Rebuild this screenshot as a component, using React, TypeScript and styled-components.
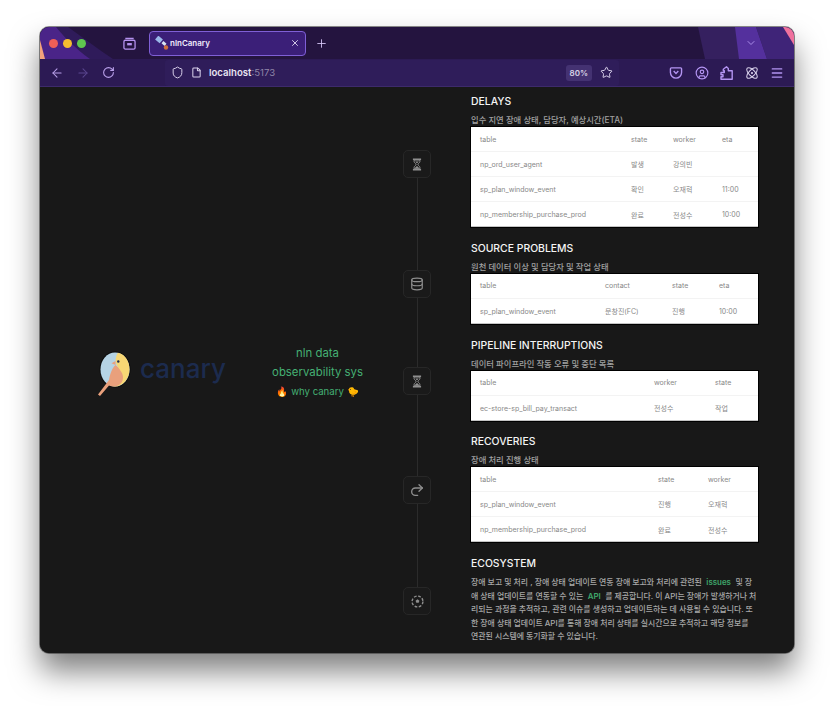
import React from "react";
import styled, { createGlobalStyle } from "styled-components";
import {
  ArrowLeft,
  ArrowRight,
  RotateCw,
  Shield,
  File,
  Star,
  Plus,
  X,
  ChevronDown,
  Database,
  Redo2,
  Menu,
  Atom,
  CircleUser,
} from "lucide-react";

const GlobalStyle = createGlobalStyle`
  html, body {
    margin: 0;
    padding: 0;
    background: #fff;
  }
  body {
    font-family: Inter, "Noto Sans CJK KR", sans-serif;
  }
`;

const Page = styled.div`
  width: 834px;
  height: 706px;
  padding: 27px 40px 53px;
  box-sizing: border-box;
  overflow: hidden;
`;

const BrowserWindow = styled.div`
  height: 626px;
  border-radius: 9px;
  overflow: hidden;
  display: flex;
  flex-direction: column;
  background: #181818;
  box-shadow: 0 0 0 1px rgba(60, 60, 60, 0.6), 0 18px 30px rgba(0, 0, 0, 0.5);
`;

const TabBar = styled.div`
  position: relative;
  height: 32px;
  flex: none;
  display: flex;
  align-items: center;
  background: #24143f;
  overflow: hidden;
`;

const TabDecor = styled.svg`
  position: absolute;
  inset: 0;
  width: 754px;
  height: 32px;
`;

const TrafficLights = styled.div`
  position: relative;
  display: flex;
  gap: 5px;
  padding-left: 9px;
  width: 72px;
  box-sizing: border-box;
`;

const Light = styled.span<{ $color: string }>`
  width: 9px;
  height: 9px;
  border-radius: 50%;
  background: ${(p) => p.$color};
`;

const TabsIcon = styled.div`
  position: relative;
  width: 34px;
  display: flex;
  justify-content: center;
  color: #b592f0;
`;

const Tab = styled.div`
  position: relative;
  margin-left: 3px;
  width: 157px;
  height: 25px;
  box-sizing: border-box;
  border: 1px solid #7f5fd6;
  border-radius: 4px;
  background: #3b1f78;
  display: flex;
  align-items: center;
  padding: 0 5px;
  gap: 1px;
  color: #efe9fb;
  font-size: 8px;
  font-weight: 600;
`;

const TabTitle = styled.span`
  flex: 1;
`;

const NewTab = styled.div`
  position: relative;
  margin-left: 9px;
  display: flex;
  color: #d8c8f8;
`;

const Collapse = styled.div`
  position: absolute;
  right: 37px;
  top: 10px;
  display: flex;
  color: #a98ce8;
`;

const NavBar = styled.div`
  height: 28px;
  flex: none;
  display: flex;
  align-items: center;
  background: #2c1a54;
  border-bottom: 1px solid #3d2a6b;
  box-sizing: border-box;
  padding-left: 10px;
`;

const NavButtons = styled.div`
  display: flex;
  align-items: center;
  gap: 12px;
  width: 115px;
  color: #b9a0ea;
`;

const UrlBar = styled.div`
  width: 454px;
  height: 26px;
  display: flex;
  align-items: center;
  background: #2f1d5a;
  border-radius: 3px;
  padding: 0 6px;
  box-sizing: border-box;
  color: #dcd4ee;
  gap: 7px;
`;

const UrlText = styled.span`
  flex: 1;
  font-size: 9.6px;
  font-weight: 600;
  color: #e8e4f2;
`;

const UrlPort = styled.span`
  font-weight: 400;
  color: #8f86a8;
`;

const Zoom = styled.span`
  background: #443272;
  color: #d8d2e6;
  font-size: 8px;
  font-weight: 600;
  padding: 3px 4px;
  border-radius: 3px;
  margin-right: 1px;
`;

const NavIcons = styled.div`
  flex: 1;
  display: flex;
  align-items: center;
  justify-content: flex-end;
  gap: 11.5px;
  padding-right: 10px;
  color: #b394f2;
`;

const Content = styled.main`
  flex: 1;
  min-height: 0;
  display: flex;
  background: #181818;
`;

const Hero = styled.section`
  width: 363px;
  flex: none;
  display: flex;
  align-items: center;
  padding: 0 28px 0 55px;
  box-sizing: border-box;
`;

const Logo = styled.div`
  display: flex;
  align-items: center;
  width: 165px;
  flex: none;
  margin-top: 6px;
`;

const LogoWord = styled.span`
  font-size: 26px;
  font-weight: 500;
  line-height: 1;
  color: #1c2b4e;
  margin-top: -9px;
`;

const Tagline = styled.div`
  flex: 1;
  display: flex;
  flex-direction: column;
  align-items: center;
  color: #45b074;
  font-size: 11.4px;
  line-height: 19px;
  margin-top: 5px;
`;

const WhyLine = styled.span`
  font-size: 9.6px;
`;

const Timeline = styled.div`
  width: 28px;
  flex: none;
  display: flex;
  flex-direction: column;
  align-items: center;
  padding-top: 63px;
`;

const Node = styled.div`
  width: 28px;
  height: 28px;
  flex: none;
  box-sizing: border-box;
  border: 1px solid #272727;
  border-radius: 5px;
  display: flex;
  align-items: center;
  justify-content: center;
  background: #1a1a1a;
  color: #8f8f8f;
`;

const Connector = styled.div<{ $h: number }>`
  width: 1px;
  height: ${(p) => p.$h}px;
  background: #2b2b2b;
`;

const Column = styled.div`
  margin-left: 40px;
  width: 287px;
  flex: none;
  padding-top: 8px;
`;

const Section = styled.section`
  margin-bottom: 14.75px;
`;

const Heading = styled.h2`
  margin: 0;
  font-size: 10.4px;
  line-height: 14px;
  font-weight: 500;
  color: #f4f4f4;
`;

const SubHeading = styled.p`
  margin: 5px 0 0;
  font-size: 8.3px;
  line-height: 13px;
  color: #a0a0a0;
  font-weight: 500;
`;

const TableCard = styled.div`
  background: #fff;
  box-shadow: inset 0 -1px 0 #c4c4c4, 0 0 0 1px #000;
`;

const Row = styled.div<{ $cols: string }>`
  display: grid;
  grid-template-columns: ${(p) => p.$cols};
  height: 25px;
  align-items: center;
  font-size: 7px;
  color: #888;
  border-bottom: 1px solid #f3f3f3;
  box-sizing: border-box;
  &:last-child {
    border-bottom: 0;
  }
`;

const Cell = styled.span`
  white-space: nowrap;
  &:first-child {
    padding-left: 9px;
  }
`;

const Body = styled.p`
  margin: 5px 0 0;
  padding-right: 0.6px;
  font-size: 7.9px;
  line-height: 13.6px;
  color: #a8a8a8;
  font-weight: 500;
`;

const Link = styled.span`
  color: #3fa66b;
  font-weight: 600;
  margin: 0 2.5px;
`;

const sections = [
  {
    title: "DELAYS",
    sub: "입수 지연 장애 상태, 담당자, 예상시간(ETA)",
    cols: "160px 42px 49px 36px",
    rows: [
      ["table", "state", "worker", "eta"],
      ["np_ord_user_agent", "발생", "강의빈", ""],
      ["sp_plan_window_event", "확인", "오재혁", "11:00"],
      ["np_membership_purchase_prod", "완료", "전성수", "10:00"],
    ],
  },
  {
    title: "SOURCE PROBLEMS",
    sub: "원천 데이터 이상 및 담당자 및 작업 상태",
    cols: "134px 67px 47px 39px",
    rows: [
      ["table", "contact", "state", "eta"],
      ["sp_plan_window_event", "문창진(FC)", "진행", "10:00"],
    ],
  },
  {
    title: "PIPELINE INTERRUPTIONS",
    sub: "데이터 파이프라인 작동 오류 및 중단 목록",
    cols: "183px 61px 43px",
    rows: [
      ["table", "worker", "state"],
      ["ec-store-sp_bill_pay_transact", "전성수", "작업"],
    ],
  },
  {
    title: "RECOVERIES",
    sub: "장애 처리 진행 상태",
    cols: "187px 50px 50px",
    rows: [
      ["table", "state", "worker"],
      ["sp_plan_window_event", "진행", "오재혁"],
      ["np_membership_purchase_prod", "완료", "전성수"],
    ],
  },
];

const CanaryMark = () => (
  <svg width="45" height="50" viewBox="0 0 45 50">
    <ellipse cx="20" cy="21.500" rx="15.500" ry="18" fill="#0c0c0c" />
    <ellipse cx="20" cy="21.500" rx="14.500" ry="17" fill="#b5d3e4" />
    <path d="M23 4.700c7 1.300 11.500 8.500 11.500 16.800 0 9-6.500 17-14.500 17-1 0-2-.1-3-.4 6-3 9-9 7.500-15.100C23 18 19.500 15 21 9.500c.4-2 1-3.600 2-4.800z" fill="#f7d774" />
    <path d="M20.500 13l-4 2.200 4 1.800z" fill="#e9a07c" />
    <circle cx="23.300" cy="13.500" r="1.200" fill="#1c2b4e" />
    <path d="M3 46.500l11-14.500c1-6 3-12 6.500-15 3.500 3 7.500 8 7.500 12 0 4-2 7.500-6 9-3 .8-6 .5-8-.6L5 48z" fill="#e9a07c" />
  </svg>
);

const HourglassIcon = () => (
  <svg width="10" height="13" viewBox="0 0 11 14">
    <path d="M1 .5h9v1.600H1zM1 11.900h9v1.600H1z" fill="currentColor" />
    <path
      d="M2.300 2.100v1.600c0 1.500 2.200 2.300 2.200 3.300S2.300 8.800 2.300 10.300v1.600h6.400v-1.600C8.700 8.800 6.500 8 6.500 7s2.200-1.800 2.200-3.300V2.100z"
      fill="none"
      stroke="currentColor"
      strokeWidth="1.100"
    />
    <path d="M3 11.600c.5-1.500 1.700-2.400 2.500-3 .8.600 2 1.500 2.500 3zM3.600 3.600h3.800c-.4 1-1.300 1.500-1.900 2-.6-.5-1.500-1-1.900-2z" fill="currentColor" />
  </svg>
);

const NodeDots = () => (
  <svg width="13" height="13" viewBox="0 0 24 24" fill="none" stroke="currentColor" strokeWidth="2.600">
    <circle cx="12" cy="12" r="10" strokeDasharray="5 2.850" />
    <path d="M12 8l3.500 2.500-1.300 4h-4.400l-1.300-4z" fill="currentColor" stroke="none" />
  </svg>
);

const PuzzleIcon = () => (
  <svg width="13" height="14" viewBox="0 0 13 14" fill="none" stroke="currentColor" strokeWidth="1.400" strokeLinejoin="round">
    <path d="M1 6.500h3.300V4.800h-1V3.300L6.500.8l1.800 1.600v2.400h3.900v8.400H1v-2.500h2V8.800H1z" />
  </svg>
);

export default function App() {
  return (
    <>
      <GlobalStyle />
      <Page>
        <BrowserWindow>
          <TabBar>
            <TabDecor viewBox="0 0 754 32">
              <path d="M0 0h28c14 10 30 22 45 32H0z" fill="#2f1b5a" />
              <path d="M0 0h16c8 10 20 22 34 32H3L0 14z" fill="#4a2488" />
              <path d="M0 13l5 19H0z" fill="#f3a27c" />
              <path d="M658 0h96v32h-89z" fill="#35205f" />
              <path d="M695 0h21l11 32h-28z" fill="#54309d" />
              <path d="M716 0h38v32h-27z" fill="#3f2478" />
              <path d="M743 0h11v18z" fill="#f0729d" />
            </TabDecor>
            <TrafficLights>
              <Light $color="#ee5f57" />
              <Light $color="#f5bd2f" />
              <Light $color="#5fc74f" />
            </TrafficLights>
            <TabsIcon>
              <svg width="13" height="13" viewBox="0 0 14 14" fill="none" stroke="currentColor" strokeWidth="1.400">
                <rect x="1" y="3.500" width="12" height="9.500" rx="1.500" />
                <path d="M2.500 1.500h9" />
                <rect x="4.500" y="6.500" width="5" height="2.500" fill="currentColor" stroke="none" />
              </svg>
            </TabsIcon>
            <Tab>
              <svg width="14" height="14" viewBox="0 0 14 14">
                <rect x="1" y="1" width="6" height="5" fill="#9ab8ea" transform="rotate(40 4 3.500)" />
                <rect x="7" y="6" width="4" height="3" fill="#d9e4f5" transform="rotate(40 9 7.500)" />
                <circle cx="11" cy="11.500" r="2.200" fill="#d0703c" />
              </svg>
              <TabTitle>nlnCanary</TabTitle>
              <X size={10} strokeWidth={2} />
            </Tab>
            <NewTab>
              <Plus size={13} strokeWidth={1.600} />
            </NewTab>
            <Collapse>
              <ChevronDown size={12} strokeWidth={2} />
            </Collapse>
          </TabBar>
          <NavBar>
            <NavButtons>
              <ArrowLeft size={14} strokeWidth={1.800} />
              <ArrowRight size={14} strokeWidth={1.800} color="#5a4690" />
              <RotateCw size={13} strokeWidth={2} />
            </NavButtons>
            <UrlBar>
              <Shield size={13} strokeWidth={1.800} />
              <File size={11} strokeWidth={2.200} />
              <UrlText>
                localhost<UrlPort>:5173</UrlPort>
              </UrlText>
              <Zoom>80%</Zoom>
              <Star size={13} strokeWidth={1.800} />
            </UrlBar>
            <NavIcons>
              <svg width="14" height="13" viewBox="0 0 14 14" fill="none" stroke="currentColor" strokeWidth="1.500">
                <path d="M2 2h10a1 1 0 0 1 1 1v4a6 6 0 0 1-12 0V3a1 1 0 0 1 1-1z" />
                <path d="M4.500 5.500L7 8l2.500-2.500" />
              </svg>
              <CircleUser size={14} strokeWidth={2} />
              <PuzzleIcon />
              <Atom size={14} strokeWidth={1.800} color="#d8d0ea" />
              <Menu size={14} strokeWidth={2.400} />
            </NavIcons>
          </NavBar>
          <Content>
            <Hero>
              <Logo>
                <CanaryMark />
                <LogoWord>canary</LogoWord>
              </Logo>
              <Tagline>
                <span>nln data</span>
                <span>observability sys</span>
                <WhyLine>🔥 why canary 🐤</WhyLine>
              </Tagline>
            </Hero>
            <Timeline>
              <Node>
                <HourglassIcon />
              </Node>
              <Connector $h={92} />
              <Node>
                <Database size={14} strokeWidth={2} />
              </Node>
              <Connector $h={69} />
              <Node>
                <HourglassIcon />
              </Node>
              <Connector $h={81} />
              <Node>
                <Redo2 size={16} strokeWidth={2} />
              </Node>
              <Connector $h={83} />
              <Node>
                <NodeDots />
              </Node>
            </Timeline>
            <Column>
              {sections.map((section) => (
                <Section key={section.title}>
                  <Heading>{section.title}</Heading>
                  <SubHeading>{section.sub}</SubHeading>
                  <TableCard>
                    {section.rows.map((row, i) => (
                      <Row key={i} $cols={section.cols}>
                        {row.map((cell, j) => (
                          <Cell key={j}>{cell}</Cell>
                        ))}
                      </Row>
                    ))}
                  </TableCard>
                </Section>
              ))}
              <Section>
                <Heading>ECOSYSTEM</Heading>
                <Body>
                  장애 보고 및 처리 , 장애 상태 업데이트 연동 장애 보고와 처리에 관련된
                  <Link> issues </Link>
                  및 장애 상태 업데이트를 연동할 수 있는
                  <Link> API </Link>
                  를 제공합니다. 이 API는 장애가 발생하거나 처리되는 과정을 추적하고, 관련 이슈를 생성하고 업데이트하는 데 사용될 수 있습니다. 또한 장애 상태 업데이트 API를 통해 장애 처리 상태를 실시간으로 추적하고 해당 정보를 연관된 시스템에 동기화할 수 있습니다.
                </Body>
              </Section>
            </Column>
          </Content>
        </BrowserWindow>
      </Page>
    </>
  );
}
